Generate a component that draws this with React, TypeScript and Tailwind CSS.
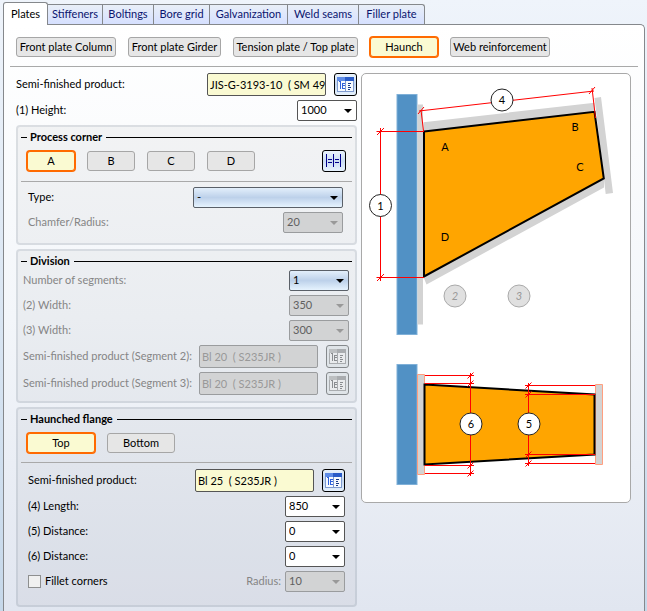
import React, { useState } from 'react';

type Tone = 'plain' | 'blue' | 'disabled';

const TABS = ['Plates', 'Stiffeners', 'Boltings', 'Bore grid', 'Galvanization', 'Weld seams', 'Filler plate'];
const TAB_WIDTHS = ['w-[45px]', 'w-[55px]', 'w-[51px]', 'w-14', 'w-[78px]', 'w-[71px]', 'w-[66px]'];

const PARTS = [
  { label: 'Front plate Column', width: 'w-[100px]' },
  { label: 'Front plate Girder', width: 'w-[93px]' },
  { label: 'Tension plate / Top plate', width: 'w-[125px]' },
  { label: 'Haunch', width: 'w-[68px]' },
  { label: 'Web reinforcement', width: 'w-[100px]' },
];

const ToggleButton: React.FC<{
  label: string;
  active: boolean;
  width: string;
  onClick: () => void;
}> = ({ label, active, width, onClick }) => (
  <button
    type="button"
    onClick={onClick}
    aria-pressed={active}
    className={`h-5 shrink-0 flex items-center justify-center whitespace-nowrap rounded-[3px] border ${width} ${
      active ? 'border-[#ff6a00] bg-[#fafad2] ring-1 ring-[#ff6a00]' : 'border-[#a6a6a6] bg-[#e6e6e6]'
    }`}
  >
    {label}
  </button>
);

const toneClasses: Record<Tone, string> = {
  plain: 'border-[#555] bg-white text-black',
  blue: 'border-[#5a6068] bg-linear-to-b from-[#e3effb] via-[#bdd1ea] to-[#e6f3fe] text-black',
  disabled: 'border-[#9a9c9e] bg-[#d2d3d4] text-[#606060]',
};

const Combo: React.FC<{ id: string; value: string; tone?: Tone; width?: string }> = ({
  id,
  value,
  tone = 'plain',
  width = 'w-[60px]',
}) => (
  <div className={`relative shrink-0 ${width}`}>
    <select
      id={id}
      disabled={tone === 'disabled'}
      className={`block h-[21px] w-full appearance-none rounded-[2px] border pl-[3px] opacity-100 ${toneClasses[tone]}`}
    >
      <option>{value}</option>
    </select>
    <svg
      className={`pointer-events-none absolute right-[5px] top-[9px] ${tone === 'disabled' ? 'text-[#999]' : 'text-black'}`}
      width="8"
      height="4"
      viewBox="0 0 8 4"
    >
      <path d="M0 0h8L4 4z" fill="currentColor" />
    </svg>
  </div>
);

const CatalogButton: React.FC<{ label: string; disabled?: boolean }> = ({ label, disabled = false }) => {
  const ink = disabled ? '#8a8d90' : '#2f62dc';
  return (
    <button
      type="button"
      disabled={disabled}
      aria-label={label}
      className={`flex size-[23px] shrink-0 items-center justify-center rounded-[3px] border ${
        disabled
          ? 'border-[#85898c] bg-[#dfe4e8]'
          : 'border-black bg-linear-to-b from-[#eaf3fc] via-[#c3d6ee] to-[#e6f2fd]'
      }`}
    >
      <svg width="17" height="17" viewBox="0 0 17 17" fill="none" shapeRendering="crispEdges">
        <path d="M0 1h17v15H0z" fill={disabled ? '#a9acaf' : '#7f9bd0'} />
        <path d="M0 1h8v4H0z" fill={disabled ? '#bcbfc1' : '#5f8ce6'} />
        <path d="M8 1h9v4H8z" fill={disabled ? '#a9acaf' : '#2a5cc8'} />
        <path d="M1 5h7v10H1zM9 5h7v10H9z" fill={disabled ? '#e9ebed' : '#f6faff'} />
        <path d="M2 5.500h2M3.500 6v7M5 7.500h3M5 9.500h3M5 12.500h3M5.500 8v4" stroke={ink} />
        <path d="M11 7.500h3M11 9.500h2M11 11.500h3M11 13.500h2" stroke={disabled ? '#8a8d90' : '#163a86'} />
      </svg>
    </button>
  );
};

const ProductField: React.FC<{ id: string; value: string; disabled?: boolean }> = ({ id, value, disabled = false }) => (
  <div className="flex shrink-0 gap-2">
    <input
      id={id}
      type="text"
      readOnly
      disabled={disabled}
      value={value}
      className={`h-[23px] w-[119px] rounded-[2px] border pl-[2px] ${
        disabled ? 'border-[#9a9c9e] bg-[#d2d3d4] text-[#999]' : 'border-[#555] bg-[#fafad2]'
      }`}
    />
    <CatalogButton label="Select product" disabled={disabled} />
  </div>
);

const Row: React.FC<{ id: string; label: string; muted?: boolean; children: React.ReactNode }> = ({
  id,
  label,
  muted = false,
  children,
}) => (
  <div className="flex items-center justify-between">
    <label htmlFor={id} className={`whitespace-nowrap ${muted ? 'text-[#858585]' : ''}`}>
      {label}
    </label>
    {children}
  </div>
);

const Group: React.FC<{ title: string; children: React.ReactNode }> = ({ title, children }) => (
  <section className="rounded-[4px] border-2 border-[#7f8c9c]/20 bg-black/[0.035] px-[3px] pt-[2px]">
    <h2 className="flex h-4 items-center gap-[3px] font-bold before:h-px before:w-[6px] before:bg-black after:ml-px after:h-px after:flex-1 after:bg-black">
      {title}
    </h2>
    {children}
  </section>
);

const Marker: React.FC<{ x: number; y: number; n: number; off?: boolean }> = ({ x, y, n, off = false }) => (
  <g>
    <circle cx={x} cy={y} r="11" fill={off ? '#e0e0e0' : '#fff'} stroke={off ? '#aaa' : '#222'} />
    <text x={x} y={y + 4} textAnchor="middle" fill={off ? '#999' : '#000'} fontStyle={off ? 'italic' : 'normal'}>
      {n}
    </text>
  </g>
);

const HaunchDrawing: React.FC = () => (
  <svg viewBox="0 0 268 428" className="block w-full" role="img" aria-label="Haunch dimensions">
    {/* side view */}
    <rect x="35" y="20.500" width="20" height="240" fill="#5191c5" stroke="#7fb0d8" />
    <path d="M55.500 30.500h5.500v220h-5.500z" fill="#d3d3d3" />
    <path d="M61.500 48.300L232.500 28.700V38L61.500 57.500zM232.500 24L239 23L251 119L243.700 120zM61.500 203L64.500 210.500L242 113.500V105z" fill="#d3d3d3" />
    <path d="M62 57.500L232.500 37.800L241.800 104.500L62 202.500z" fill="#ffa500" stroke="#000" strokeWidth="2" />
    <path
      d="M14.500 57.500H62M14.500 203.500H62M18.500 54V207M57 37L232 17M59 36L61.500 57M230 14L233.500 44M15 61L22 54M15 207L22 200M56 40L62 33M227 20L233 13"
      fill="none"
      stroke="#f00"
    />
    <Marker x={18.5} y={131.5} n={1} />
    <Marker x={140} y={26} n={4} />
    <Marker x={93} y={222} n={2} off />
    <Marker x={157} y={222} n={3} off />
    <g textAnchor="middle">
      <text x="83" y="77">A</text>
      <text x="213" y="57">B</text>
      <text x="218" y="97">C</text>
      <text x="83" y="167">D</text>
    </g>

    {/* top view */}
    <rect x="35" y="290.500" width="20" height="120" fill="#5191c5" stroke="#7fb0d8" />
    <path d="M55.500 300.500h7v100h-7zM233.500 310.500h7v80h-7z" fill="#d3d3d3" stroke="#ff9f80" />
    <path d="M62.500 310.500L232.500 320.500V380.500L62.500 390.500z" fill="#ffa500" stroke="#000" strokeWidth="2" />
    <path
      d="M63 301.500H112M63 309.500H112M63 391.500H112M63 399.500H112M108.500 299V402M163 311.500H233M163 320.500H233M163 380.500H233M163 389.500H233M166.500 309V392"
      fill="none"
      stroke="#f00"
    />
    <path
      d="M105.500 304.500l6-6M105.500 312.500l6-6M105.500 394.500l6-6M105.500 402.500l6-6M163.500 314.500l6-6M163.500 323.500l6-6M163.500 383.500l6-6M163.500 392.500l6-6"
      fill="none"
      stroke="#f00"
    />
    <Marker x={109} y={350} n={6} />
    <Marker x={167} y={350} n={5} />
  </svg>
);

const App: React.FC = () => {
  const [tab, setTab] = useState('Plates');
  const [part, setPart] = useState('Haunch');
  const [corner, setCorner] = useState('A');
  const [flange, setFlange] = useState('Top');

  return (
    <div className="flex min-h-screen flex-col bg-linear-to-b from-[#eff4fb] to-[#c6d8ea] pl-[3px] pr-[2px] pt-[2px] font-[Lato,sans-serif] text-[11px] text-black">
      <nav className="relative z-10 flex items-end" role="tablist">
        {TABS.map((name, i) => (
          <button
            key={name}
            type="button"
            role="tab"
            aria-selected={tab === name}
            onClick={() => setTab(name)}
            className={`flex shrink-0 items-center justify-center whitespace-nowrap border-t border-[#85888c] ${TAB_WIDTHS[i]} ${
              tab === name
                ? '-mb-px h-[23px] rounded-t-[3px] border-x bg-white'
                : 'h-5 border-r bg-linear-to-b from-[#e9eff8] to-[#d6e0ff] text-[#0a146e] last:rounded-tr-[3px]'
            }`}
          >
            {name}
          </button>
        ))}
      </nav>

      <main className="flex-1 rounded-tr-[5px] border border-b-0 border-[#85888c] bg-linear-to-b from-white via-[#f3f6fa] to-[#e1e6f0] px-[6px] pb-1 pt-3">
        <div className="flex gap-3 border-b border-[#a9a9a9] px-[6px] pb-[9px]">
          {PARTS.map(p => (
            <ToggleButton key={p.label} {...p} active={part === p.label} onClick={() => setPart(p.label)} />
          ))}
        </div>

        <div className="flex items-start gap-1 px-[6px] pt-[6px]">
          <div className="flex w-[341px] shrink-0 flex-col gap-1">
            <Row id="product" label="Semi-finished product:">
              <ProductField id="product" value="JIS-G-3193-10  ( SM 490 )" />
            </Row>
            <Row id="height" label="(1) Height:">
              <Combo id="height" value="1000" />
            </Row>

            <Group title="Process corner">
              <div className="flex items-center gap-3 border-b border-[#a9a9a9] px-[6px] pb-[9px] pt-[5px]">
                {['A', 'B', 'C', 'D'].map(c => (
                  <ToggleButton key={c} label={c} width="w-12" active={corner === c} onClick={() => setCorner(c)} />
                ))}
                <button
                  type="button"
                  aria-label="Mirror corners"
                  className="ml-auto flex h-[22px] w-6 items-center justify-center rounded-[3px] border border-black bg-linear-to-b from-[#eaf3fc] via-[#c9dcf2] to-[#e6f2fd]"
                >
                  <svg width="16" height="14" viewBox="0 0 16 14" fill="none" stroke="#00008b" shapeRendering="crispEdges">
                    <path d="M.5 0v13M7.500 0v13M14.500 0v13M2 5.500h4M2 8.500h4M9 5.500h4M9 8.500h4" />
                  </svg>
                </button>
              </div>
              <div className="flex flex-col gap-1 pb-[10px] pl-[7px] pr-[9px] pt-[5px]">
                <Row id="type" label="Type:">
                  <Combo id="type" value="-" tone="blue" width="w-[150px]" />
                </Row>
                <Row id="chamfer" label="Chamfer/Radius:" muted>
                  <Combo id="chamfer" value="20" tone="disabled" />
                </Row>
              </div>
            </Group>

            <Group title="Division">
              <div className="flex flex-col gap-1 pb-[6px] pl-[2px] pr-[3px] pt-px">
                <Row id="segments" label="Number of segments:" muted>
                  <Combo id="segments" value="1" tone="blue" />
                </Row>
                <Row id="width2" label="(2) Width:" muted>
                  <Combo id="width2" value="350" tone="disabled" />
                </Row>
                <Row id="width3" label="(3) Width:" muted>
                  <Combo id="width3" value="300" tone="disabled" />
                </Row>
                <Row id="segment2" label="Semi-finished product (Segment 2):" muted>
                  <ProductField id="segment2" value="Bl 20  ( S235JR )" disabled />
                </Row>
                <Row id="segment3" label="Semi-finished product (Segment 3):" muted>
                  <ProductField id="segment3" value="Bl 20  ( S235JR )" disabled />
                </Row>
              </div>
            </Group>

            <Group title="Haunched flange">
              <div className="flex gap-3 border-b border-[#a9a9a9] px-[6px] pb-[9px] pt-[6px]">
                {['Top', 'Bottom'].map(f => (
                  <ToggleButton key={f} label={f} width="w-[68px]" active={flange === f} onClick={() => setFlange(f)} />
                ))}
              </div>
              <div className="flex flex-col gap-1 pb-[13px] pl-[7px] pr-[7px] pt-[6px]">
                <Row id="flange-product" label="Semi-finished product:">
                  <ProductField id="flange-product" value="Bl 25  ( S235JR )" />
                </Row>
                <Row id="length4" label="(4) Length:">
                  <Combo id="length4" value="850" />
                </Row>
                <Row id="distance5" label="(5) Distance:">
                  <Combo id="distance5" value="0" />
                </Row>
                <Row id="distance6" label="(6) Distance:">
                  <Combo id="distance6" value="0" />
                </Row>
                <div className="flex items-center">
                  <label className="flex items-center gap-1">
                    <input type="checkbox" className="size-[13px] appearance-none border border-[#8e8f8f] bg-[#f0f0f0] checked:bg-[#3a6dd4]" />
                    Fillet corners
                  </label>
                  <label htmlFor="radius" className="ml-auto mr-1 text-[#858585]">
                    Radius:
                  </label>
                  <Combo id="radius" value="10" tone="disabled" />
                </div>
              </div>
            </Group>
          </div>

          <div className="mr-px min-w-0 flex-1 rounded-[5px] border border-[#a9a9a9] bg-white">
            <HaunchDrawing />
          </div>
        </div>
      </main>
    </div>
  );
};

export default App;
